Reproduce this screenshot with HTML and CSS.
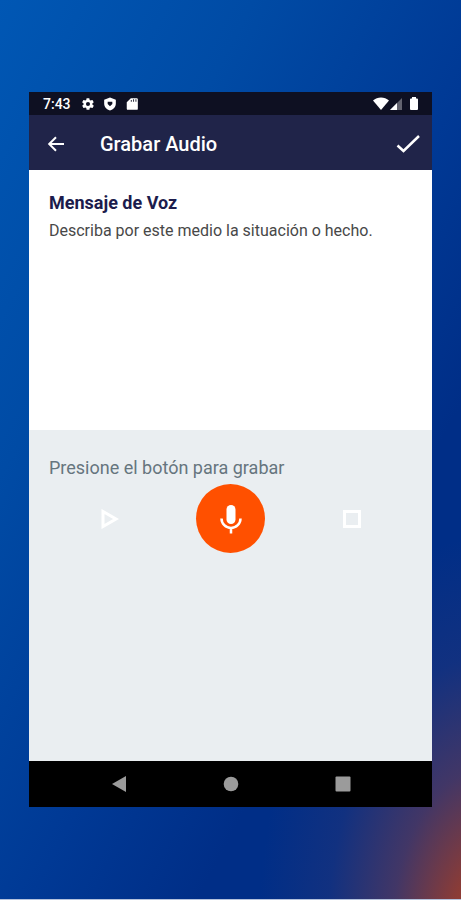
FILE: index.html
```html
<!DOCTYPE html>
<html lang="es">
<head>
<meta charset="utf-8">
<meta name="viewport" content="width=device-width, initial-scale=1">
<title>Grabar Audio</title>
<link rel="stylesheet" href="styles.css">
</head>
<body>
<div class="phone">
  <div class="status-bar">
    <span class="clock">7:43</span>
    <svg class="status-icon" viewBox="0 0 24 24" aria-hidden="true"><path fill-rule="evenodd" d="M19.4 13l.1-1-.1-1 2.1-1.6a.5.5 0 0 0 .1-.7l-2-3.400a.5.5 0 0 0-.6-.2l-2.500 1a7 7 0 0 0-1.700-1l-.4-2.600a.5.5 0 0 0-.5-.5h-4a.5.5 0 0 0-.5.5L9 5.100a7 7 0 0 0-1.700 1l-2.500-1a.5.5 0 0 0-.6.2l-2 3.400a.5.5 0 0 0 .1.700L4.500 11l-.1 1 .1 1-2.100 1.600a.5.5 0 0 0-.1.700l2 3.400c.1.2.4.3.6.2l2.500-1a7 7 0 0 0 1.700 1l.4 2.600c0 .3.2.5.5.5h4c.3 0 .5-.2.5-.5l.4-2.600a7 7 0 0 0 1.700-1l2.500 1c.2.1.5 0 .6-.2l2-3.400a.5.5 0 0 0-.1-.7zM12 15.500a3.500 3.500 0 1 1 0-7 3.500 3.500 0 0 1 0 7z"/></svg>
    <svg class="status-icon" viewBox="0 0 24 24" aria-hidden="true"><path fill-rule="evenodd" d="M12 1L2 4.500V11c0 6 4.300 10.500 10 12 5.700-1.500 10-6 10-12V4.500zM8 8h8v4l-4 4-4-4z"/></svg>
    <svg class="status-icon" viewBox="0 0 24 24" aria-hidden="true"><path fill-rule="evenodd" d="M20 2H10L3 9v11a2 2 0 0 0 2 2h15a2 2 0 0 0 2-2V4a2 2 0 0 0-2-2zM10 8V5h1.500v3zM14 8V4h1.500v4zM18 8V4h1.500v4z"/></svg>
    <svg class="status-icon wifi" viewBox="0 0 16 13" aria-hidden="true"><path d="M0 3.500C4.500-.5 11.500-.5 16 3.500L8 13z"/></svg>
    <svg class="status-icon signal" viewBox="0 0 12 12" aria-hidden="true"><path opacity=".35" d="M12 0v12H0z"/><path d="M7 5v7H0z"/></svg>
    <svg class="status-icon battery" viewBox="0 0 8 13" aria-hidden="true"><path d="M2 0h4v1.500h1a1 1 0 0 1 1 1V12a1 1 0 0 1-1 1H1a1 1 0 0 1-1-1V2.500a1 1 0 0 1 1-1h1z"/></svg>
  </div>

  <header class="app-bar">
    <button class="icon-button" type="button" aria-label="Atrás">
      <svg class="back-icon" viewBox="0 0 16 16"><path d="M16 8H1.500M8 1.200L1.200 8 8 14.800"/></svg>
    </button>
    <h1 class="app-title">Grabar Audio</h1>
    <button class="icon-button" type="button" aria-label="Aceptar">
      <svg class="check-icon" viewBox="0 0 24 18"><path d="M1.500 10.500L7.500 16 23 1"/></svg>
    </button>
  </header>

  <main class="content">
    <section class="message">
      <h2 class="message-title">Mensaje de Voz</h2>
      <p class="message-text">Describa por este medio la situación o hecho.</p>
    </section>
    <section class="recorder">
      <p class="recorder-hint">Presione el botón para grabar</p>
      <div class="controls">
        <button class="icon-button" type="button" aria-label="Reproducir">
          <svg class="play-icon" viewBox="0 0 18 20"><path d="M2 2.500v15L15 10z"/></svg>
        </button>
        <button class="record-button" type="button" aria-label="Grabar">
          <svg class="mic-icon" viewBox="0 0 22 30"><rect x="6.500" y="1" width="9" height="19" rx="4.500"/><path d="M1.500 14.500a9.500 9.500 0 0 0 19 0M11 24v5.500"/></svg>
        </button>
        <button class="icon-button" type="button" aria-label="Detener">
          <svg class="stop-icon" viewBox="0 0 18 18"><path d="M1.500 1.500h15v15h-15z"/></svg>
        </button>
      </div>
    </section>
  </main>

  <nav class="nav-bar" aria-label="Sistema">
    <button class="icon-button" type="button" aria-label="Volver"><svg class="nav-icon" viewBox="0 0 16 16"><path d="M15 0v16L1 8z"/></svg></button>
    <button class="icon-button" type="button" aria-label="Inicio"><svg class="nav-icon" viewBox="0 0 16 16"><circle cx="8" cy="8" r="7.300"/></svg></button>
    <button class="icon-button" type="button" aria-label="Recientes"><svg class="nav-icon" viewBox="0 0 16 16"><rect x=".5" y=".5" width="15" height="15" rx="1"/></svg></button>
  </nav>
</div>
</body>
</html>
```
FILE: styles.css
```css
* {
  box-sizing: border-box;
}

body {
  display: flex;
  min-height: 100vh;
  margin: 0;
  padding: 92px 29px;
  border-bottom: 1px solid #b4c2dc;
  background:
    radial-gradient(ellipse 230px 400px at 106% 104%, #b5401c 0%, rgba(160, 62, 42, .85) 18%, rgba(110, 60, 80, .6) 42%, rgba(50, 54, 115, .35) 70%, rgba(0, 46, 135, 0) 100%),
    linear-gradient(118deg, #0057b4 0%, #004ba5 27%, #003995 54%, #002e87 72%, #002e87 100%);
  font-family: Roboto, "Liberation Sans", sans-serif;
}

h1,
h2,
p {
  margin: 0;
}

button {
  display: flex;
  align-items: center;
  justify-content: center;
  padding: 0;
  border: 0;
  background: none;
}

svg {
  display: block;
}

.phone {
  display: flex;
  flex: 1;
  flex-direction: column;
}

.status-bar {
  display: flex;
  align-items: center;
  height: 23px;
  padding: 0 14px;
  background: #0e1022;
  color: #fff;
}

.clock {
  margin-right: 10px;
  font-size: 14px;
  font-weight: 500;
  line-height: 24px;
}

.status-icon {
  width: 14px;
  height: 14px;
  margin-right: 8px;
  fill: #fff;
}

.wifi {
  width: 16px;
  height: 13px;
  margin: 0 1px 0 auto;
}

.signal {
  width: 12px;
  height: 12px;
}

.battery {
  width: 8px;
  height: 13px;
  margin-right: 0;
}

.app-bar {
  display: flex;
  align-items: center;
  height: 55px;
  padding: 2px 12px 0 18px;
  background: #202449;
}

.app-title {
  flex: 1;
  margin-left: 35px;
  color: #fff;
  font-size: 20px;
  font-weight: 500;
  line-height: 24px;
}

.back-icon,
.check-icon,
.play-icon,
.stop-icon {
  fill: none;
  stroke: #fff;
}

.back-icon {
  width: 18px;
  height: 16px;
  stroke-width: 2;
}

.check-icon {
  width: 24px;
  height: 18px;
  stroke-width: 2.5;
}

.content {
  display: flex;
  flex: 1;
  flex-direction: column;
}

.message {
  flex: 260;
  padding: 19px 20px;
  background: #fff;
}

.message-title {
  color: #1c1c4c;
  font-size: 18px;
  font-weight: 700;
  line-height: 28px;
}

.message-text {
  color: #484848;
  font-size: 16px;
  line-height: 28px;
}

.recorder {
  flex: 331;
  padding: 24px 20px;
  background: #eaeef1;
}

.recorder-hint {
  color: #66757e;
  font-size: 18px;
  line-height: 28px;
}

.controls {
  display: grid;
  grid-template-columns: repeat(3, 1fr);
  justify-items: center;
  align-items: center;
  margin-top: 2px;
}

.play-icon {
  width: 18px;
  height: 20px;
  stroke-width: 3;
}

.stop-icon {
  width: 18px;
  height: 18px;
  stroke-width: 3;
}

.record-button {
  width: 69px;
  height: 69px;
  border-radius: 50%;
  background: #ff5000;
}

.mic-icon {
  width: 22px;
  height: 30px;
  fill: #fff;
}

.mic-icon path {
  fill: none;
  stroke: #fff;
  stroke-width: 2.5;
}

.nav-bar {
  display: grid;
  grid-template-columns: repeat(3, 112px);
  justify-content: center;
  justify-items: center;
  align-items: center;
  height: 46px;
  background: #000;
}

.nav-icon {
  width: 16px;
  height: 16px;
  fill: #9b9b9b;
}
```
